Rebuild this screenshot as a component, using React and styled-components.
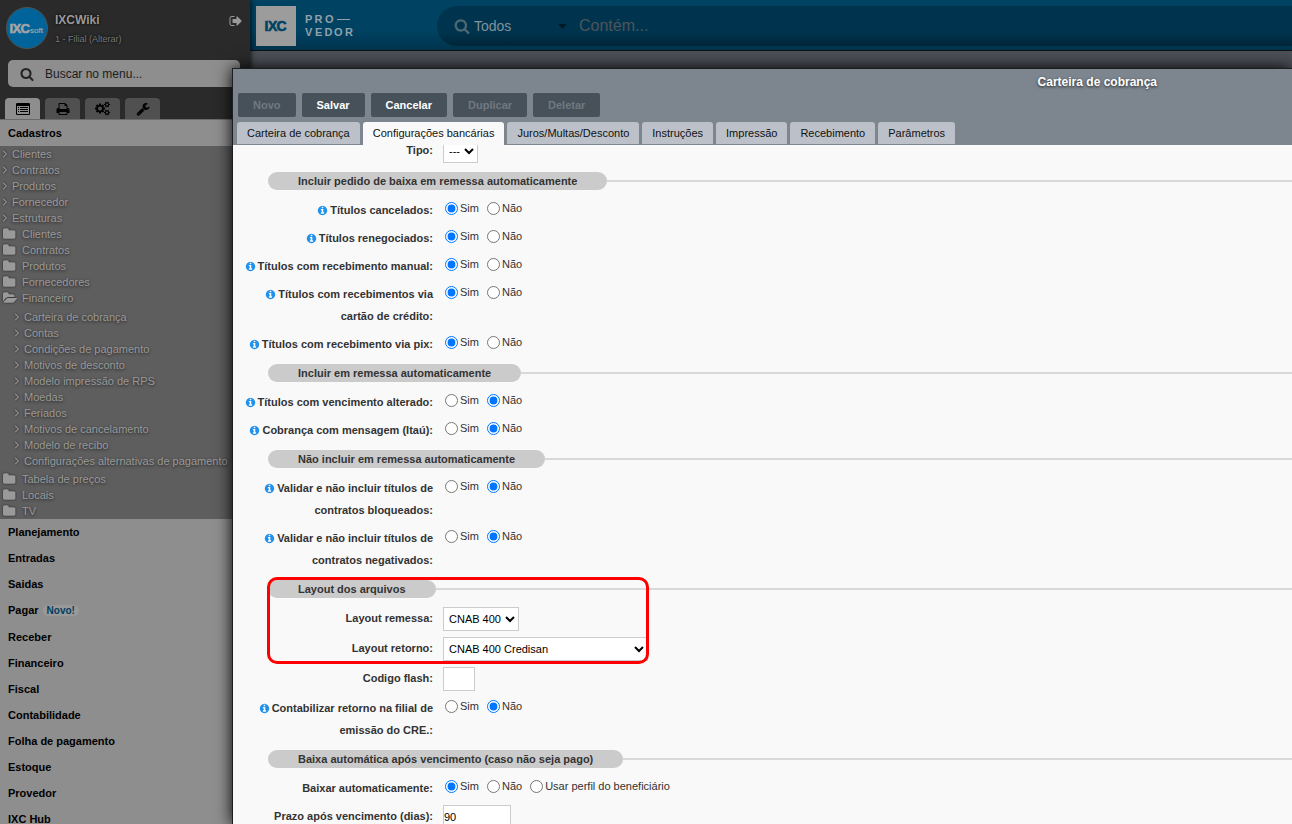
import { useState } from 'react';
import styled, { createGlobalStyle } from 'styled-components';

const GlobalStyle = createGlobalStyle`
  *, *::after {
    box-sizing: border-box;
  }
  body {
    margin: 0;
    background-color: #2a2a2a;
    font-family: 'Liberation Sans', Arial, sans-serif;
    font-size: 11px;
    color: #333;
  }
  button, input, select {
    font-family: inherit;
    font-size: inherit;
  }
  ul {
    list-style: none;
    margin: 0;
    padding: 0;
  }
  a {
    color: inherit;
    text-decoration: none;
  }
`;

const Page = styled.div`
  position: relative;
  display: flex;
  height: 100vh;
  overflow: hidden;
`;

const Sidebar = styled.aside`
  position: relative;
  width: 250px;
  flex-shrink: 0;
  background-color: #2a2a2a;
  box-shadow: 0 0 6px #000;
  z-index: 1;
`;

const UserBar = styled.div`
  display: flex;
  gap: 7px;
  padding: 7px 7px 0 6px;
  height: 60px;
  button {
    margin: 7px 0 auto auto;
    padding: 0;
    border: 0;
    background: none;
    color: #9a9a9a;
    line-height: 0;
  }
`;

const UserInfo = styled.div`
  display: flex;
  flex-direction: column;
  gap: 5px;
  padding-top: 6px;
  text-shadow: 0 0 3px #000;
  strong {
    font-size: 12px;
    line-height: 14px;
    color: #999;
  }
  a {
    font-size: 9px;
    line-height: 14px;
    color: #777;
  }
`;

const MenuSearch = styled.label`
  display: flex;
  align-items: center;
  gap: 11px;
  height: 27px;
  margin: 0 10px 0 8px;
  padding: 0 12px;
  border-radius: 5px;
  background-color: #8e8e8e;
  color: #222;
  input {
    flex: 1;
    min-width: 0;
    padding: 0;
    border: 0;
    outline: 0;
    background: none;
    font-size: 12px;
  }
  input::placeholder {
    color: #1c1c1c;
    opacity: 1;
  }
`;

const MenuTabs = styled.div`
  display: flex;
  gap: 5px;
  padding: 11px 5px 0;
  border-bottom: 1px solid #6a6a6a;
`;

const MenuTab = styled.button`
  display: flex;
  align-items: center;
  justify-content: center;
  width: 35px;
  height: 21px;
  padding: 0;
  border: 0;
  border-radius: 4px 4px 0 0;
  background-color: ${(props) => (props.$active ? '#8e8e8e' : '#505050')};
  color: #000;
`;

const MenuHeader = styled.a`
  display: flex;
  align-items: center;
  height: ${(props) => (props.$badge ? '27px' : '26px')};
  padding-left: 8px;
  padding-bottom: ${(props) => (props.$badge ? '1px' : '0')};
  background-color: #8e8e8e;
  color: #000;
  font-weight: bold;
`;

const Badge = styled.span`
  margin-left: 4px;
  padding: 0 4px;
  border-radius: 6px;
  background-color: #999;
  color: #033d60;
  font-size: 10px;
  line-height: 11px;
`;

const MenuTree = styled.ul`
  background-color: #5e5e5e;
  color: #999;
  text-shadow: 0 1px 3px #222;
  ul {
    padding: 3px 0 2px 12px;
  }
`;

const MenuItem = styled.a`
  display: flex;
  align-items: center;
  gap: ${(props) => (props.$folder ? '5px' : '3px')};
  height: 16px;
  padding-left: ${(props) => (props.$folder ? '3px' : '1px')};
  white-space: nowrap;
  svg {
    filter: drop-shadow(0 0 1px #222);
  }
`;

const Main = styled.div`
  flex: 1;
  min-width: 0;
  background-color: #4c5057;
`;

const TopBar = styled.header`
  display: flex;
  height: 51px;
  padding: 6px 0 0 6px;
  border-bottom: 1px solid #111;
  background: linear-gradient(#004262 60%, #00344e);
`;

const GlobalSearch = styled.div`
  display: flex;
  align-items: center;
  flex: 1;
  height: 40px;
  margin-left: 80px;
  padding-left: 17px;
  border-radius: 20px 0 0 20px;
  background: linear-gradient(#00344e 65%, #002538);
  color: #4d6873;
  select {
    width: 84px;
    margin-left: 4px;
    padding: 0;
    border: 0;
    outline: 0;
    appearance: none;
    background: none;
    color: #7e939d;
    font-size: 14px;
  }
  input {
    flex: 1;
    min-width: 0;
    margin-left: 12px;
    padding: 0;
    border: 0;
    outline: 0;
    background: none;
    font-size: 16px;
  }
  input::placeholder {
    color: #4d555a;
    opacity: 1;
  }
`;

/* floating form window, opened over the menu and the top bar */
const Window = styled.section`
  position: absolute;
  top: 68px;
  left: 232px;
  right: 0;
  bottom: 0;
  z-index: 2;
  display: flex;
  flex-direction: column;
  border-top: 1px solid #1c1f22;
  border-left: 1px solid #1c1f22;
  background-color: #7d868f;
  box-shadow: 0 0 15px #000;
`;

const WindowTitle = styled.h1`
  margin: 0;
  padding: 5px 135px 3px 0;
  color: #fff;
  font-size: 12px;
  line-height: 16px;
  text-align: right;
  text-shadow: 0 1px 3px #222;
`;

const ButtonBar = styled.div`
  display: flex;
  gap: 6px;
  padding: 0 5px;
`;

const ActionButton = styled.button`
  height: 24px;
  padding: 0 15px;
  border: 0;
  border-radius: 2px;
  background-color: #47515a;
  color: #fff;
  font-weight: bold;
  &:disabled {
    color: #707981;
  }
`;

const TabBar = styled.div`
  display: flex;
  gap: 3px;
  padding: 5px 4px 0;
`;

const Tab = styled.button`
  height: 23px;
  padding: 0 10px;
  border: 0;
  border-bottom: 1px solid ${(props) => (props.$active ? '#f9f9f9' : '#7d868f')};
  border-radius: 3px 3px 0 0;
  background-color: ${(props) => (props.$active ? '#f9f9f9' : '#bcc1c9')};
  color: #111;
`;

const Body = styled.div`
  flex: 1;
  min-height: 0;
  overflow: hidden;
  background-color: #f9f9f9;
`;

const Form = styled.form`
  margin-top: -9px;
`;

const Divider = styled.h2`
  display: flex;
  align-items: center;
  margin: 0;
  padding: 6px 0 6px 35px;
  font-size: 11px;
  line-height: 18px;
  span {
    padding: 0 30px;
    border-radius: 9px;
    background-color: #cbcbcb;
  }
  &::after {
    content: '';
    flex: 1;
    height: 2px;
    background-color: #d9d9d9;
  }
`;

const Row = styled.div`
  display: flex;
  align-items: flex-start;
  padding: 3px 0;
`;

const Label = styled.label`
  width: 200px;
  margin-right: 10px;
  font-weight: bold;
  line-height: 22px;
  text-align: right;
  svg {
    margin-right: 2px;
    color: #2191ee;
    vertical-align: -2px;
  }
`;

const Radios = styled.div`
  display: flex;
  gap: 8px;
  padding-left: 2px;
  label {
    display: flex;
    align-items: center;
    gap: 2px;
    height: 18px;
  }
  input {
    width: 13px;
    height: 13px;
    margin: 0;
  }
`;

const Select = styled.select`
  width: ${(props) => props.$width};
  height: 24px;
  padding: 0 1px;
  border: 1px solid #ccc;
  border-radius: 0;
  background-color: #fff;
  color: #000;
`;

const TextInput = styled.input`
  width: ${(props) => props.$width};
  height: 24px;
  padding: 0;
  border: 1px solid #ccc;
  background-color: #fff;
  color: #000;
`;

const Highlight = styled.div`
  position: relative;
  &::after {
    content: '';
    position: absolute;
    top: 3px;
    bottom: 0;
    left: 34px;
    width: 382px;
    border: 3px solid #f00;
    border-radius: 10px;
    pointer-events: none;
  }
`;

const icons = {
  search:
    'M1216 832q0-185-131.5-316.5t-316.5-131.5-316.5 131.5-131.5 316.5 131.5 316.5 316.5 131.5 316.5-131.5 131.5-316.5zm512 832q0 52-38 90t-90 38q-54 0-90-38l-343-342q-179 124-399 124-143 0-273.5-55.5t-225-150-150-225-55.5-273.5 55.5-273.5 150-225 225-150 273.5-55.5 273.5 55.5 225 150 150 225 55.5 273.5q0 220-124 399l343 343q37 37 37 90z',
  signOut:
    'M704 1440q0 4 1 20t.5 26.5-3 23.5-10 19.5-20.5 6.5h-320q-119 0-203.5-84.5t-84.5-203.5v-704q0-119 84.5-203.5t203.5-84.5h320q13 0 22.5 9.5t9.5 22.5q0 4 1 20t.5 26.5-3 23.5-10 19.5-20.5 6.5h-320q-66 0-113 47t-47 113v704q0 66 47 113t113 47h312l11.5 1 11.5 3 8 5.5 7 9 2 13.5zm928-544q0 26-19 45l-544 544q-19 19-45 19t-45-19-19-45v-288h-448q-26 0-45-19t-19-45v-384q0-26 19-45t45-19h448v-288q0-26 19-45t45-19 45 19l544 544q19 19 19 45z',
  list: 'M160 128h1472q160 0 160 160v1216q0 160-160 160h-1472q-160 0-160-160v-1216q0-160 160-160zm-32 384v960q0 64 64 64h1408q64 0 64-64v-960zm128 128h128v128h-128zm256 0h1024v128h-1024zm-256 256h128v128h-128zm256 0h1024v128h-1024zm-256 256h128v128h-128zm256 0h1024v128h-1024z',
  print:
    'M448 1536h896v-256h-896v256zm0-640h896v-384h-160q-40 0-68-28t-28-68v-160h-640v640zm1152 64q0-26-19-45t-45-19-45 19-19 45 19 45 45 19 45-19 19-45zm128 0v416q0 13-9.5 22.5t-22.5 9.5h-224v160q0 40-28 68t-68 28h-960q-40 0-68-28t-28-68v-160h-224q-13 0-22.5-9.5t-9.5-22.5v-416q0-79 56.5-135.5t135.5-56.5h64v-544q0-40 28-68t68-28h672q40 0 88 20t76 48l152 152q28 28 48 76t20 88v256h64q79 0 135.5 56.5t56.5 135.5z',
  cogs: 'M896 896q0-106-75-181t-181-75-181 75-75 181 75 181 181 75 181-75 75-181zm768 512q0-52-38-90t-90-38-90 38-38 90q0 53 37.5 90.5t90.5 37.5 90.5-37.5 37.5-90.5zm0-1024q0-52-38-90t-90-38-90 38-38 90q0 53 37.5 90.5t90.5 37.5 90.5-37.5 37.5-90.5zm-384 421v185q0 10-7 19.5t-16 10.5l-155 24q-11 35-32 76 34 48 90 115 7 11 7 20 0 12-7 19-23 30-82.5 89.5t-78.5 59.5q-11 0-21-7l-115-90q-37 19-77 31-11 108-23 155-7 24-30 24h-186q-11 0-20-7.5t-10-17.5l-23-153q-34-10-75-31l-118 89q-7 7-20 7-11 0-21-8-144-133-144-160 0-9 7-19 10-14 41-53t47-61q-23-44-35-82l-152-24q-10-1-17-9.5t-7-19.5v-185q0-10 7-19.5t16-10.5l155-24q11-35 32-76-34-48-90-115-7-11-7-20 0-12 7-20 22-30 82-89t79-59q11 0 21 7l115 90q34-18 77-32 11-108 23-154 7-24 30-24h186q11 0 20 7.5t10 17.5l23 153q34 10 75 31l118-89q8-7 20-7 11 0 21 8 144 133 144 160 0 8-7 19-12 16-42 54t-45 60q23 48 34 82l152 23q10 2 17 10.5t7 19.5zm640 533v140q0 16-149 31-12 27-30 52 51 113 51 138 0 4-4 7-122 71-124 71-8 0-46-47t-52-68q-20 2-30 2t-30-2q-14 21-52 68t-46 47q-2 0-124-71-4-3-4-7 0-25 51-138-18-25-30-52-149-15-149-31v-140q0-16 149-31 13-29 30-52-51-113-51-138 0-4 4-7 4-2 35-20t59-34 30-16q8 0 46 46.5t52 67.5q20-2 30-2t30 2q51-71 92-112l6-2q4 0 124 70 4 3 4 7 0 25-51 138 17 23 30 52 149 15 149 31zm0-1024v140q0 16-149 31-12 27-30 52 51 113 51 138 0 4-4 7-122 71-124 71-8 0-46-47t-52-68q-20 2-30 2t-30-2q-14 21-52 68t-46 47q-2 0-124-71-4-3-4-7 0-25 51-138-18-25-30-52-149-15-149-31v-140q0-16 149-31 13-29 30-52-51-113-51-138 0-4 4-7 4-2 35-20t59-34 30-16q8 0 46 46.5t52 67.5q20-2 30-2t30 2q51-71 92-112l6-2q4 0 124 70 4 3 4 7 0 25-51 138 17 23 30 52 149 15 149 31z',
  wrench:
    'M448 1472q0-26-19-45t-45-19-45 19-19 45 19 45 45 19 45-19 19-45zm644-420l-682 682q-37 37-90 37-52 0-91-37l-106-108q-38-36-38-90 0-53 38-91l681-681q39 98 114.5 173.5t173.5 114.5zm634-435q0 39-23 106-47 134-164.5 217.5t-258.5 83.5q-185 0-316.5-131.5t-131.5-316.5 131.5-316.5 316.5-131.5q58 0 121.5 16.5t107.5 46.5q16 11 16 28t-16 28l-293 169v224l193 107q5-3 79-48.5t135.5-81 70.5-35.5q15 0 23.5 10t8.5 25z',
  angle:
    'M1171 960q0 13-10 23l-466 466q-10 10-23 10t-23-10l-50-50q-10-10-10-23t10-23l393-393-393-393q-10-10-10-23t10-23l50-50q10-10 23-10t23 10l466 466q10 10 10 23z',
  folder:
    'M1664 608v704q0 92-66 158t-158 66h-1216q-92 0-158-66t-66-158v-960q0-92 66-158t158-66h320q92 0 158 66t66 158v32h672q92 0 158 66t66 158z',
  folderOpen:
    'M1879 952q0 31-31 66l-336 396q-43 51-120.5 86.5t-143.5 35.5h-1088q-34 0-60.5-13t-26.5-43q0-31 31-66l336-396q43-51 120.5-86.5t143.5-35.5h1088q34 0 60.5 13t26.5 43zm-343-344v160h-832q-94 0-197 47.5t-164 119.5l-337 396-5 6q0-4-.5-12.5t-.5-12.5v-960q0-92 66-158t158-66h320q92 0 158 66t66 158v32h544q92 0 158 66t66 158z',
  info: 'M1152 1376v-160q0-14-9-23t-23-9h-96v-512q0-14-9-23t-23-9h-320q-14 0-23 9t-9 23v160q0 14 9 23t23 9h96v320h-96q-14 0-23 9t-9 23v160q0 14 9 23t23 9h448q14 0 23-9t9-23zm-128-896v-160q0-14-9-23t-23-9h-192q-14 0-23 9t-9 23v160q0 14 9 23t23 9h192q14 0 23-9t9-23zm640 416q0 209-103 385.5t-279.5 279.5-385.5 103-385.5-103-279.5-279.5-103-385.5 103-385.5 279.5-279.5 385.5-103 385.5 103 279.5 279.5 103 385.5z',
};

function Icon({ name, size, box = '0 0 1792 1792' }) {
  return (
    <svg width={size} height={size} viewBox={box} fill="currentColor" fillRule="evenodd" aria-hidden="true">
      <path d={icons[name]} />
    </svg>
  );
}

function Avatar() {
  return (
    <svg width="42" height="42" viewBox="0 0 42 42">
      <circle cx="21" cy="21" r="20.5" fill="#00649a" stroke="#4a5357" />
      <text x="3.5 6.5 14.5" y="26" fontSize="13" fontWeight="900" fill="#a5a5a5" stroke="#a5a5a5" strokeWidth="0.6">
        IXC
      </text>
      <text x="24" y="26" fontSize="8" fill="#a5a5a5" stroke="#a5a5a5" strokeWidth="0.2">
        soft
      </text>
    </svg>
  );
}

function Logo() {
  return (
    <svg width="101" height="40" viewBox="0 0 101 40">
      <rect width="40" height="40" fill="#9c9c9c" />
      <text x="8.5 12 20.5" y="25" fontSize="14" fontWeight="900" fill="#004262" stroke="#004262" strokeWidth="0.6">
        IXC
      </text>
      <g fontSize="11" fontWeight="bold" fill="#8fa1aa">
        <text x="49 58.5 69" y="17">
          PRO
        </text>
        <text x="49 59 68.5 78 89" y="30">
          VEDOR
        </text>
      </g>
      <rect x="81" y="13" width="13" height="1" fill="#8fa1aa" />
    </svg>
  );
}

const menuTabs = [
  { icon: 'list', label: 'Menu', size: 14 },
  { icon: 'print', label: 'Relatórios', size: 14 },
  { icon: 'cogs', label: 'Configurações', size: 15, box: '0 0 1920 1792' },
  { icon: 'wrench', label: 'Ferramentas', size: 14 },
];

const links = ['Clientes', 'Contratos', 'Produtos', 'Fornecedor', 'Estruturas'];
const folders = ['Clientes', 'Contratos', 'Produtos', 'Fornecedores'];
const financeiro = [
  'Carteira de cobrança',
  'Contas',
  'Condições de pagamento',
  'Motivos de desconto',
  'Modelo impressão de RPS',
  'Moedas',
  'Feriados',
  'Motivos de cancelamento',
  'Modelo de recibo',
  'Configurações alternativas de pagamento',
];
const lastFolders = ['Tabela de preços', 'Locais', 'TV'];
const menus = [
  'Planejamento',
  'Entradas',
  'Saidas',
  'Pagar',
  'Receber',
  'Financeiro',
  'Fiscal',
  'Contabilidade',
  'Folha de pagamento',
  'Estoque',
  'Provedor',
  'IXC Hub',
];

const tabs = [
  'Carteira de cobrança',
  'Configurações bancárias',
  'Juros/Multas/Desconto',
  'Instruções',
  'Impressão',
  'Recebimento',
  'Parâmetros',
];

function Link({ text }) {
  return (
    <li>
      <MenuItem href="#">
        <Icon name="angle" size={8} box="448 384 896 1152" />
        {text}
      </MenuItem>
    </li>
  );
}

function Folder({ text, open, children }) {
  return (
    <li>
      <MenuItem href="#" $folder>
        <Icon name={open ? 'folderOpen' : 'folder'} size={14} box="0 0 1879 1792" />
        {text}
      </MenuItem>
      {children}
    </li>
  );
}

function RadioRow({ name, label, info, value, options = ['Sim', 'Não'] }) {
  const [selected, setSelected] = useState(value);
  return (
    <Row role="radiogroup" aria-labelledby={name}>
      <Label as="div" id={name}>
        {info && <Icon name="info" size={11} box="128 0 1536 1792" />}
        {label}
      </Label>
      <Radios>
        {options.map((el) => (
          <label key={el}>
            <input type="radio" name={name} checked={selected === el} onChange={() => setSelected(el)} />
            {el}
          </label>
        ))}
      </Radios>
    </Row>
  );
}

function SelectRow({ name, label, width, option }) {
  return (
    <Row>
      <Label htmlFor={name}>{label}</Label>
      <Select id={name} $width={width}>
        <option>{option}</option>
      </Select>
    </Row>
  );
}

function InputRow({ name, label, width, value }) {
  return (
    <Row>
      <Label htmlFor={name}>{label}</Label>
      <TextInput id={name} type="text" $width={width} defaultValue={value} />
    </Row>
  );
}

function Menu() {
  return (
    <Sidebar>
      <UserBar>
        <Avatar />
        <UserInfo>
          <strong>IXCWiki</strong>
          <a href="#">1 - Filial (Alterar)</a>
        </UserInfo>
        <button type="button" aria-label="Sair">
          <Icon name="signOut" size={14} />
        </button>
      </UserBar>
      <MenuSearch>
        <Icon name="search" size={14} />
        <input type="text" placeholder="Buscar no menu..." aria-label="Buscar no menu" />
      </MenuSearch>
      <MenuTabs>
        {menuTabs.map((el, i) => (
          <MenuTab key={el.icon} type="button" aria-label={el.label} $active={i === 0}>
            <Icon name={el.icon} size={el.size} box={el.box} />
          </MenuTab>
        ))}
      </MenuTabs>
      <MenuHeader href="#">Cadastros</MenuHeader>
      <MenuTree>
        {links.map((el) => (
          <Link key={el} text={el} />
        ))}
        {folders.map((el) => (
          <Folder key={el} text={el} />
        ))}
        <Folder text="Financeiro" open>
          <ul>
            {financeiro.map((el) => (
              <Link key={el} text={el} />
            ))}
          </ul>
        </Folder>
        {lastFolders.map((el) => (
          <Folder key={el} text={el} />
        ))}
      </MenuTree>
      {menus.map((el) => (
        <MenuHeader key={el} href="#" $badge={el === 'Pagar'}>
          {el}
          {el === 'Pagar' && <Badge>Novo!</Badge>}
        </MenuHeader>
      ))}
    </Sidebar>
  );
}

function App() {
  const [active, setActive] = useState(1);
  return (
    <Page>
      <GlobalStyle />
      <Menu />
      <Main>
        <TopBar>
          <Logo />
          <GlobalSearch>
            <Icon name="search" size={16} />
            <select aria-label="Filtro">
              <option>Todos</option>
            </select>
            <svg width="9" height="5" viewBox="0 0 9 5" fill="#001a28">
              <path d="M0 0h9L4.5 5z" />
            </svg>
            <input type="text" placeholder="Contém..." aria-label="Contém" />
          </GlobalSearch>
        </TopBar>
      </Main>
      <Window>
        <WindowTitle>Carteira de cobrança</WindowTitle>
        <ButtonBar>
          <ActionButton disabled>Novo</ActionButton>
          <ActionButton>Salvar</ActionButton>
          <ActionButton>Cancelar</ActionButton>
          <ActionButton disabled>Duplicar</ActionButton>
          <ActionButton disabled>Deletar</ActionButton>
        </ButtonBar>
        <TabBar>
          {tabs.map((el, i) => (
            <Tab key={el} type="button" $active={i === active} onClick={() => setActive(i)}>
              {el}
            </Tab>
          ))}
        </TabBar>
        <Body>
          <Form>
            <SelectRow name="tipo" label="Tipo:" width="35px" option="---" />
            <Divider>
              <span>Incluir pedido de baixa em remessa automaticamente</span>
            </Divider>
            <RadioRow name="cancelados" label="Títulos cancelados:" value="Sim" info />
            <RadioRow name="renegociados" label="Títulos renegociados:" value="Sim" info />
            <RadioRow name="manual" label="Títulos com recebimento manual:" value="Sim" info />
            <RadioRow name="cartao" label="Títulos com recebimentos via cartão de crédito:" value="Sim" info />
            <RadioRow name="pix" label="Títulos com recebimento via pix:" value="Sim" info />
            <Divider>
              <span>Incluir em remessa automaticamente</span>
            </Divider>
            <RadioRow name="vencimento" label="Títulos com vencimento alterado:" value="Não" info />
            <RadioRow name="mensagem" label="Cobrança com mensagem (Itaú):" value="Não" info />
            <Divider>
              <span>Não incluir em remessa automaticamente</span>
            </Divider>
            <RadioRow name="bloqueados" label="Validar e não incluir títulos de contratos bloqueados:" value="Não" info />
            <RadioRow name="negativados" label="Validar e não incluir títulos de contratos negativados:" value="Não" info />
            <Highlight>
              <Divider>
                <span>Layout dos arquivos</span>
              </Divider>
              <SelectRow name="remessa" label="Layout remessa:" width="76px" option="CNAB 400" />
              <SelectRow name="retorno" label="Layout retorno:" width="205px" option="CNAB 400 Credisan" />
            </Highlight>
            <InputRow name="flash" label="Codigo flash:" width="32px" />
            <RadioRow name="filial" label="Contabilizar retorno na filial de emissão do CRE.:" value="Não" info />
            <Divider>
              <span>Baixa automática após vencimento (caso não seja pago)</span>
            </Divider>
            <RadioRow
              name="baixar"
              label="Baixar automaticamente:"
              value="Sim"
              options={['Sim', 'Não', 'Usar perfil do beneficiário']}
            />
            <InputRow name="prazo" label="Prazo após vencimento (dias):" width="68px" value="90" />
          </Form>
        </Body>
      </Window>
    </Page>
  );
}

export default App;
